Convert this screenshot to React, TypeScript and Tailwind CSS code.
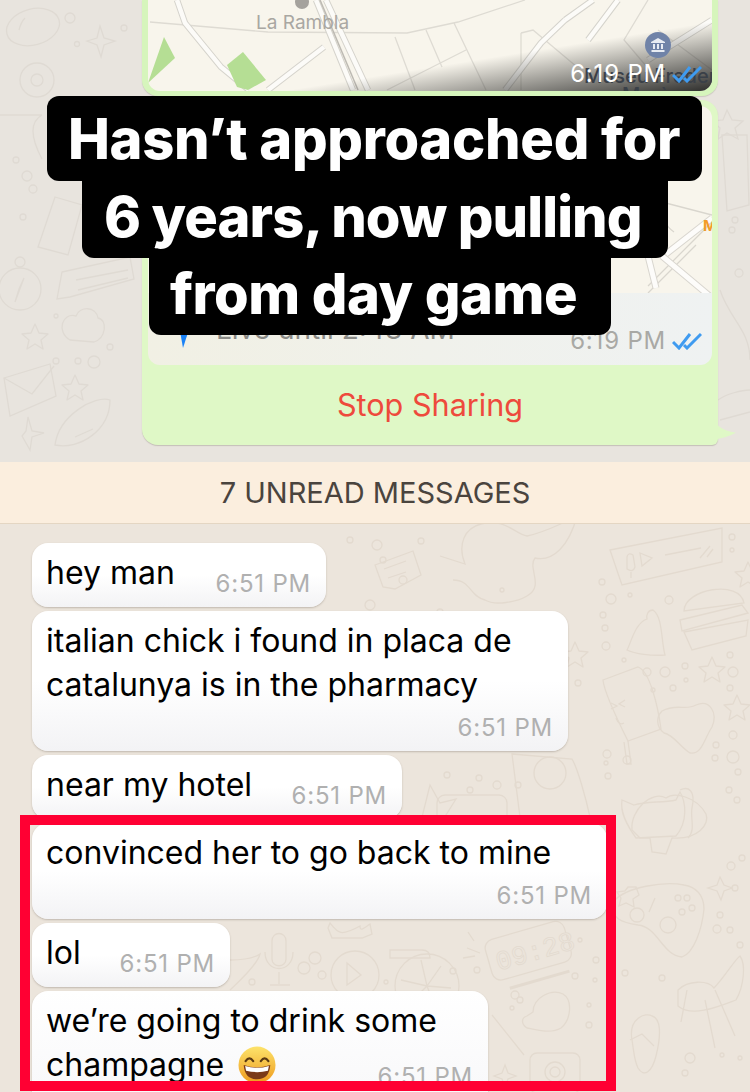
const font = { fontFamily: "Inter, 'Liberation Sans', sans-serif" };

function Checks({ className }: { className?: string }) {
  return (
    <svg viewBox="0 0 30 18" className={className} fill="none" stroke="currentColor" strokeWidth="3">
      <path d="M1 10l6 6L18 2" />
      <path d="M12 13l3 3L29 2" />
    </svg>
  );
}

function Dots({ list }: { list: number[][] }) {
  return (
    <>
      {list.map(([x, y, r], i) => (
        <circle key={i} cx={x} cy={y} r={r} />
      ))}
    </>
  );
}

function Star({ x, y, s = 1 }: { x: number; y: number; s?: number }) {
  return (
    <path
      transform={`translate(${x} ${y}) scale(${s})`}
      d="M0-13L4-4 13-3 6 3 8 12 0 7-8 12-6 3-13-3-4-4Z"
      strokeLinejoin="round"
    />
  );
}

function Wallpaper() {
  return (
    <svg
      className="absolute inset-0"
      width="750"
      height="1092"
      viewBox="0 0 750 1092"
      fill="none"
      stroke="#e3dacf"
      strokeWidth="1.3"
    >
      {/* top left */}
      <g stroke="#dfdad3">
        <ellipse cx="33" cy="27" rx="27" ry="18" transform="rotate(-15 33 27)" />
        <path d="M19 30q2-8 6-12" />
        <circle cx="37" cy="80" r="17" />
        <circle cx="37" cy="80" r="6" />
        <path d="M0 115h42M42 115q-18 10 0 44" />
        <path d="M55 197l27 8-14 50-30-8Z" />
        <circle cx="20" cy="289" r="21" />
        <circle cx="20" cy="262" r="5" />
        <path d="M24 278l-9 24 4-13Z" />
        <path d="M62 272l68-15 4 22-64 18-13 2Z" />
        <path d="M76 280l52-10M78 290l50-12" />
        <path d="M70 340c-14-8-8-28 6-24 4-10 20-10 22 2 10 2 8 20-4 24Z" />
        <Star x={35} y={337} />
        <path d="M4 378l46-14 6 32-46 20Z" />
        <path d="M4 378l28 16 22-28" />
        <Star x={75} y={388} />
        <path d="M55 445c4-30 40-50 55-45 0 30-30 50-55 45Z" />
        <path d="M75 437l18-8" />
        <path d="M22 436l8 14 2-13 12-4-12-2-4-14-2 14Z" />
        <Dots list={[[70, 18, 5], [77, 44, 2.5], [124, 28, 3], [16, 160, 3], [27, 176, 5], [33, 189, 4], [23, 217, 3], [56, 316, 2], [56, 361, 3], [78, 361, 3], [94, 362, 6], [110, 347, 3]]} />
        <path d="M100 26l4 12 11 3-11 4-3 12-4-12-10-4 10-3Z" />
      </g>
      <g stroke="#dfdad3">
        <path d="M727 110l5 10 11 1-8 7 3 11-11-6-9 6 2-11-8-7 11-1Z" />
        <path d="M722 135l25 0 2 70-22 6Z" />
        <Dots list={[[735, 220, 3], [732, 230, 3], [739, 273, 4]]} />
        <path d="M720 290c10 30 30 40 30 70" />
        <path d="M718 400c8-6 24-10 32-10M720 420l30-8" />
      </g>
      {/* lower wallpaper */}
      <path d="M610 550l112-22v34l-100 23Z" />
      <path d="M627 557v12q6 4 8-2l-2-12q-5-3-6 2ZM631 578v-6M640 553l12 5-10 8ZM665 555l36-7M700 558l10-12M707 557l6-8" />
      <path d="M684 611c0-22 56-32 60-8ZM680 620l62-15 6 8-66 18ZM684 632l64-12-2 16-54 14Z" />
      <path d="M653 610c-5 0-7 5-6 9-12 4-16 24-20 31 8 4 24 6 38 5-4-14-2-38-12-45Z" />
      <path d="M603 680l35-13c12 4 20 40 23 62l-33 12c-10-20-24-50-25-61Z" />
      <path d="M624 742l3 22h4l-3-23M611 703l6 3-6 3M625 700l-6 4 6 3M616 718q3 8 8 5" />
      <path d="M662 711c14-8 24 0 34-6 14-6 22 8 16 22-8 12-10 28-22 26-10-6-16-18-26-20-8-6-8-16-2-22Z" />
      <path d="M512 754l60 5c6 10 14 40 18 58-22 8-56 14-68 16Z" />
      <circle cx="550" cy="773" r="16" />
      <path d="M622 800l12 5c12-4 28-2 42-5l4-8c6 10 8 30-4 44l-40 2c-10-14-16-26-14-38Z" />
      <path d="M680 790c8-4 16 0 12 18-2 10 4 22-4 30" />
      <Star x={712} y={670} />
      <Star x={737} y={708} />
      <Star x={748} y={575} />
      <Star x={575} y={655} />
      <Dots list={[[602, 582, 3], [611, 599, 5], [630, 595, 2], [669, 600, 4], [603, 615, 3], [605, 628, 3], [606, 646, 4], [624, 660, 2], [647, 672, 4], [665, 672, 5], [685, 666, 3], [686, 680, 2], [673, 688, 3], [653, 690, 2], [730, 655, 3], [733, 672, 5], [730, 688, 3], [578, 683, 3], [607, 754, 4], [627, 760, 4], [733, 735, 4], [716, 745, 3], [733, 757, 6], [715, 758, 3], [738, 772, 3], [729, 790, 3], [737, 800, 3], [606, 763, 2], [533, 725, 3], [608, 776, 3], [732, 537, 3], [732, 550, 2], [502, 590, 2]]} />
      <path d="M614 901c12-14 50-20 70-16 12 2 20 10 20 24-2 20-10 44-22 48-20-2-24-30-44-32-14-2-30-6-24-24Z" />
      <circle cx="637" cy="915" r="7" />
      <circle cx="668" cy="925" r="8" />
      <path d="M628 887h8l3 8-6 4 1 8-8-4-7 3 2-8-4-6 8-1ZM655 898l-6 14" />
      <Dots list={[[678, 898, 3], [687, 898, 3], [682, 912, 3], [692, 908, 3], [720, 915, 3], [730, 930, 3], [717, 929, 4], [731, 866, 4], [742, 858, 3], [735, 888, 3], [610, 935, 2], [662, 978, 3], [625, 973, 3], [740, 945, 3]]} />
      <path d="M720 877l4 8 8 3-8 3-3 9-4-9-9-3 9-3Z" />
      <path d="M687 990l-6 32M705 1000l10 48M715 990l20 46" />
      <path d="M678 990c10-10 30-10 36-2 10-10 22-30 26-32 6 8 4 30-4 44-16 6-44 18-58 6Z" />
      <path d="M632 1040c-4-22 14-28 20-24 8 2 10 16 4 40-4 16-12 22-18 12-4-8-4-16-6-28Z" />
      <path d="M630 1040l12-6 12 12" />
      <Dots list={[[690, 1058, 5], [685, 1073, 3], [722, 1055, 2], [740, 1058, 2]]} />
      <path d="M632 830c-2-20 20-40 34-32 8-6 30-2 40 16 4 10-8 26-34 24l-6 16-14-2-2-14-10 0Z" />
      {/* inside red frame */}
      <g transform="rotate(-16 527 950)">
        <rect x="487" y="930" width="82" height="42" rx="9" />
        <text x="494" y="962" fontSize="27" fill="#ece5dc" stroke="#e3dacf" strokeWidth="0.8" style={{ fontFamily: "'Liberation Mono', monospace" }}>
          09:28
        </text>
        <path d="M500 982l62 0" strokeWidth="3" />
      </g>
      <path d="M467 948l13 5M463 958l12-2M468 932l6 9" />
      <circle cx="427" cy="986" r="32" />
      <path d="M427 986l-6-26M427 986l14-20M427 986l24 2M427 986l10 26M427 986l-18 18M427 986l-26-6" />
      <path d="M533 1012c0-14 18-24 30-18 10 6 8 26-2 34-10 6-24 2-34 0-6-4-6-10 0-12Z" />
      <path d="M492 1015l32 40" />
      <rect x="530" y="1053" width="50" height="40" rx="7" />
      <circle cx="555" cy="1072" r="10" />
      <circle cx="555" cy="1072" r="5" />
      <path d="M505 1065l3 8 8 3-8 3-3 8-3-8-8-3 8-3Z" />
      <path d="M272 941c0-10 14-10 14 0v18c0 9-14 9-14 0ZM265 952c0 22 28 22 28 0M279 972v12M270 985h20" />
      <circle cx="355" cy="975" r="24" />
      <path d="M347 963l14 12-14 10Z" />
      <path d="M230 960c12 0 24-2 30-6-3 12-24 30-30 36" />
      <path d="M330 923c8 10 10 14 30 3 0 6 4 2 10-2l2 10-10 4-30 0-4-10Z" />
      <path d="M390 950h32c6 0 8 4 8 8h-40Z" />
      <Dots list={[[315, 958, 6], [322, 975, 4], [304, 968, 6], [386, 982, 2], [252, 982, 3], [453, 971, 3], [520, 1000, 3], [475, 1023, 2], [515, 995, 4], [477, 970, 3], [512, 1008, 2], [580, 940, 2], [575, 976, 3], [596, 960, 3], [595, 980, 2], [589, 1025, 3], [589, 1005, 2]]} />
      <Dots list={[[403, 580, 4], [444, 498, 2], [421, 541, 3], [350, 540, 3], [370, 605, 5], [385, 622, 3], [396, 640, 4], [440, 612, 3], [352, 628, 3], [377, 545, 5], [383, 560, 3]]} />
      <path d="M375 565l38-14 8 24-26 14-12-2Z" />
      <path d="M384 569l22-8M388 578l18-6" />
      <path d="M440 556l25 8c-8-20 0-36 16-40 24-6 34 10 46 12 20-4 50-20 50-20-8 30-24 46-42 42-8 10 10 28-8 38-10 6-32 10-42 4-16-4-14-20-32-20" />
      <path d="M430 785l10 18 16-4-10 16 8 18-18-8-16 10 2-18Z" />
      <Dots list={[[497, 785, 4], [479, 778, 3], [518, 785, 3], [447, 775, 3], [470, 790, 3]]} />
      <rect x="437" y="795" width="70" height="30" rx="8" />
    </svg>
  );
}

function MapOne() {
  const wide = "M29 0l8 23 36 44 28 23M168 0l37 90M178 0l42 90M176 47L120 90M417 20L445 0M417 20L393 43 357 90M470 0L440 40M500 60L564 20";
  return (
    <svg className="absolute inset-0" width="564" height="91" viewBox="0 0 564 91" fill="none">
      <path
        d="M2 22l118 10 139 1 51-11 67-22M247 37l20 53M278 30l16 37M306 23l32 67M318 50l-79 40M373 33v57M373 33l12-3 44 37M500 0l-24 40 34 40M510 30l54 40"
        stroke="#dedbd3"
        strokeWidth="1.3"
      />
      <path d={wide} stroke="#d5d3cc" strokeWidth="6.500" />
      <path d={wide} stroke="#fcfbf8" strokeWidth="4.500" />
      <path d="M172 0l38 90" stroke="#bdbab3" strokeWidth="1.500" />
      <path d="M0 83L16 37 27 58Z" fill="#b5de94" />
      <path d="M79 65l16-13 23 28-18 10-11-3Z" fill="#b5de94" />
      <text x="108" y="29" fontSize="19" fill="#a9a7a2" style={font}>
        La Rambla
      </text>
      <circle cx="154" cy="2" r="7" fill="#a5a29d" />
    </svg>
  );
}

function MapTwo() {
  return (
    <svg className="absolute inset-0" width="564" height="187" viewBox="0 0 564 187" fill="none">
      <path d="M510 95l54 14M512 98q2 20 14 28M500 187l48-48M500 180l64-64" stroke="#d9d6ce" strokeWidth="1.300" />
      <path d="M514 150l50 42M564 112l-46 36M500 150l8 32" stroke="#d9d6cf" strokeWidth="7" />
      <path d="M514 150l50 42M564 112l-46 36M500 150l8 32" stroke="#fdfcfa" strokeWidth="5" />
      <text x="555" y="125" fontSize="15" fontWeight="700" fill="#f39c28" style={font}>
        M
      </text>
    </svg>
  );
}

function Bubble({ width, lines, stack }: { width: number; lines: string[]; stack?: boolean }) {
  const time = <span className="text-[24px] leading-[32px] tracking-[0.8px] text-[#b0b0b0]">6:51 PM</span>;
  return (
    <div
      className="bg-linear-to-b from-white from-50% to-[#f3f3f5] rounded-2xl shadow-[0_1px_2px_rgba(90,80,70,0.3)] pl-[14px] pr-[15px] pt-[8px] pb-[7px] shrink-0"
      style={{ width }}
    >
      {stack ? (
        <div className="flex flex-col">
          {lines.map((l) => (
            <div key={l} className="text-[32px] leading-[44px] text-black whitespace-nowrap">
              {l}
            </div>
          ))}
          <div className="flex justify-end mt-[5px]">{time}</div>
        </div>
      ) : (
        <div className="flex justify-between h-[49px]">
          <div className="text-[32px] leading-[44px] text-black">{lines[0]}</div>
          <div className="self-end">{time}</div>
        </div>
      )}
    </div>
  );
}

function Grin() {
  return (
    <svg viewBox="0 0 40 40" className="inline-block w-[38px] h-[38px] align-[-8px] ml-[14px]">
      <defs>
        <linearGradient id="gr" x1="0" y1="0" x2="0" y2="1">
          <stop offset="0" stopColor="#fde36b" />
          <stop offset="1" stopColor="#ee9a1e" />
        </linearGradient>
      </defs>
      <circle cx="20" cy="20" r="19.5" fill="url(#gr)" />
      <path d="M8 16q4-6 8 0M24 16q4-6 8 0" fill="none" stroke="#5b3a12" strokeWidth="2.2" strokeLinecap="round" />
      <path d="M6 20q14 5 28 0q-1 15-14 15T6 20Z" fill="#7a3a18" />
      <path d="M7.5 21q12.5 4 25 0l-1 5q-11 3-23 0Z" fill="#fff" />
    </svg>
  );
}

export default function App() {
  return (
    <div className="relative w-[750px] h-[1092px] overflow-hidden bg-[#ece5dc]" style={font}>
      <div className="absolute inset-x-0 top-0 h-[462px] bg-[#e8e4de]" />
      <Wallpaper />

      <div className="relative flex flex-col gap-1 h-[462px] pl-[142px]">
        {/* first location bubble, cut by the top of the picture */}
        <div className="w-[576px] h-[96px] shrink-0 bg-[#d6f5bc] rounded-b-2xl px-[6px] pb-[5px] shadow-[0_1px_1px_rgba(90,80,70,0.2)]">
          <div className="relative w-full h-full bg-[#f8f5ec] rounded-b-xl overflow-hidden">
            <MapOne />
            <div className="absolute inset-0 bg-linear-to-br from-transparent from-[62%] to-[#2e2e2c]" />
            <div className="absolute left-[436px] top-[64px] text-[20px] leading-[24px] font-medium text-[#3a4048] whitespace-nowrap">
              Museu Frederic
            </div>
            <div className="absolute left-[474px] top-[83px] text-[20px] leading-[24px] font-medium text-[#3a4048]">Marès</div>
            <div className="absolute left-[497px] top-[32px] w-[26px] h-[26px] rounded-full bg-[#7083a8] flex items-center justify-center">
              <svg viewBox="0 0 16 16" className="w-[16px] h-[16px]" fill="#e8ecf3">
                <path d="M8 1L1 5v1h14V5ZM3 7h2v5H3ZM7 7h2v5H7ZM11 7h2v5h-2ZM1.500 13h13v2h-13Z" />
              </svg>
            </div>
            <div className="absolute right-[10px] top-[60px] flex items-center gap-[6px]">
              <span className="text-[24px] leading-[28px] tracking-[0.8px] text-white">6:19 PM</span>
              <Checks className="w-[30px] h-[18px] text-[#3f9bf0]" />
            </div>
          </div>
        </div>

        {/* live location bubble */}
        <div className="relative w-[576px] h-[345px] shrink-0 bg-[#dff8c6] rounded-2xl rounded-br-md px-[6px] pt-[6px] shadow-[0_1px_1px_rgba(90,80,70,0.25)]">
          <div className="relative h-[187px] bg-[#f8f5ec] rounded-t-xl overflow-hidden">
            <MapTwo />
          </div>
          <div className="relative h-[72px] bg-linear-to-r from-[#f1f0e4] to-[#eff2f2] rounded-b-xl">
            <div className="absolute left-[23px] top-[27px] w-[22px] h-[28px]">
              <svg viewBox="0 0 22 28" className="w-full h-full" fill="#1a82f7">
                <path d="M7 0h14L12 28Z" />
              </svg>
            </div>
            <span className="absolute left-[68px] top-[20px] text-[28px] leading-[32px] text-[#8a8a86] whitespace-nowrap">Live until 2:48 AM</span>
            <div className="absolute right-[10px] top-[32px] flex items-center gap-[6px]">
              <span className="text-[24px] leading-[32px] tracking-[0.8px] text-[#a9a9a5]">6:19 PM</span>
              <Checks className="w-[30px] h-[18px] text-[#3f9bf0]" />
            </div>
          </div>
          <div className="h-[80px] flex items-center justify-center text-[30.600px] text-[#ee4a3c]">Stop Sharing</div>
          <svg viewBox="0 0 20 24" className="absolute left-[570px] top-[312px] w-[24px] h-[32px]" fill="#dff8c6">
            <path d="M0 0c2 10 8 14 20 16-6 3-12 5-20 6Z" />
          </svg>
        </div>
      </div>

      <div className="relative h-[62px] bg-[#fbeede] border-b border-[#e4d6c3] pt-[1px] flex items-center justify-center text-[29px] text-[#4a443e]">
        7 UNREAD MESSAGES
      </div>

      <div className="relative flex flex-col items-start gap-1 pl-[32px] pt-[19px]">
        <Bubble width={294} lines={["hey man"]} />
        <Bubble width={536} stack lines={["italian chick i found in placa de", "catalunya is in the pharmacy"]} />
        <Bubble width={370} lines={["near my hotel"]} />
        <Bubble width={575} stack lines={["convinced her to go back to mine"]} />
        <Bubble width={198} lines={["lol"]} />
        <div className="w-[456px] shrink-0 bg-linear-to-b from-white to-[#f6f6f8] rounded-2xl pl-[14px] pr-[15px] pt-[8px] h-[140px] shadow-[0_1px_2px_rgba(90,80,70,0.3)]">
          <div className="text-[32px] leading-[44px] text-black">we’re going to drink some</div>
          <div className="text-[32px] leading-[44px] text-black flex justify-between">
            <span>
              champagne
              <Grin />
            </span>
            <span className="text-[24px] leading-[32px] tracking-[0.8px] text-[#b0b0b0] mt-[18px]">6:51 PM</span>
          </div>
        </div>
      </div>

      {/* red highlight frame */}
      <div className="absolute left-[20px] top-[815px] w-[596px] h-[276px] border-[10px] border-[#ff0033]" />

      {/* story caption */}
      <div className="absolute left-[47px] top-[96px] flex flex-col items-start font-extrabold text-[56px] text-white whitespace-nowrap">
        <div className="w-[655px] h-[85px] bg-black rounded-xl pl-[21px] leading-[86px] tracking-[-0.3px]">Hasn’t approached for</div>
        <div className="ml-[35px] w-[586px] h-[77px] bg-black rounded-b-xl pl-[22px] leading-[72px] tracking-[-0.9px]">6 years, now pulling</div>
        <div className="ml-[102px] w-[462px] h-[77px] bg-black rounded-b-xl pl-[21px] leading-[72px] tracking-[-0.4px]">from day game</div>
      </div>
    </div>
  );
}
